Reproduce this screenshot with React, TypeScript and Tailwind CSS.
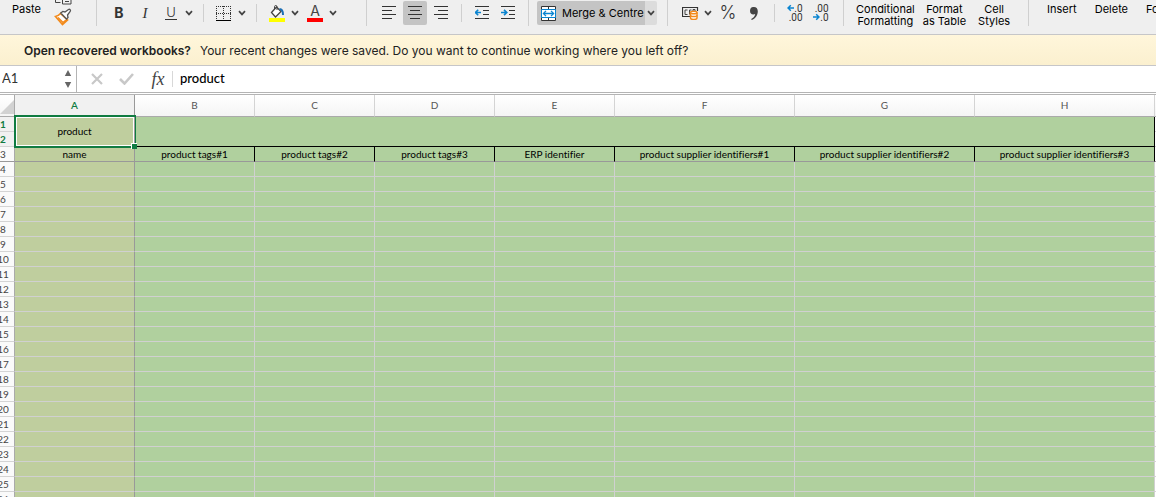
import type { ReactNode } from "react";
import clsx from "clsx";

const columns = [
  { id: "A", title: "name", width: "w-[120px]" },
  { id: "B", title: "product tags#1", width: "w-[120px]" },
  { id: "C", title: "product tags#2", width: "w-[120px]" },
  { id: "D", title: "product tags#3", width: "w-[120px]" },
  { id: "E", title: "ERP identifier", width: "w-[120px]" },
  { id: "F", title: "product supplier identifiers#1", width: "w-[180px]" },
  { id: "G", title: "product supplier identifiers#2", width: "w-[180px]" },
  { id: "H", title: "product supplier identifiers#3", width: "w-[180px]" },
];

const emptyRows = Array.from({ length: 23 }, (_, i) => i + 4);

function Divider() {
  return <span className="mx-2 mt-1 h-[18px] w-px shrink-0 bg-[#cfcfcf]" />;
}

function Group({ children, className }: { children: ReactNode; className?: string }) {
  return (
    <div className={clsx("flex h-[26px] shrink-0 border-r border-[#cfcfcf]", className)}>
      {children}
    </div>
  );
}

function Tool({
  label,
  active,
  children,
}: {
  label: string;
  active?: boolean;
  children: ReactNode;
}) {
  return (
    <button
      type="button"
      aria-label={label}
      className={clsx(
        "mt-px flex h-6 w-6 shrink-0 items-center justify-center rounded-xs",
        active && "bg-[#c4c4c4]"
      )}
    >
      {children}
    </button>
  );
}

function Chevron({ label, active }: { label: string; active?: boolean }) {
  return (
    <button
      type="button"
      aria-label={label}
      className={clsx(
        "mt-px flex h-6 w-3 shrink-0 items-center justify-center rounded-r-xs",
        active && "bg-[#dcdcdc]"
      )}
    >
      <svg width="8" height="6" viewBox="0 0 8 6" fill="none" stroke="#444" strokeWidth="1.7">
        <path d="M1 1.2 4 4.4 7 1.2" />
      </svg>
    </button>
  );
}

function AlignIcon({ lines }: { lines: number[][] }) {
  return (
    <svg width="14" height="14" viewBox="0 0 14 14" fill="#333">
      {lines.map(([x, w], i) => (
        <rect key={i} x={x} y={i * 4} width={w} height="1" />
      ))}
    </svg>
  );
}

function IndentIcon({ flip }: { flip?: boolean }) {
  return (
    <svg width="14" height="14" viewBox="0 0 14 14">
      <path d="M0 .5h14M8 4.5h6M8 8.5h6M0 12.5h14" stroke="#333" />
      <path
        d={flip ? "M0 6.5h5.5M3 3.8l2.8 2.7L3 9.2" : "M6 6.5H.8M3.2 3.8.5 6.5l2.7 2.7"}
        fill="none"
        stroke="#0a84d0"
        strokeWidth="1.6"
      />
    </svg>
  );
}

function BrushIcon() {
  return (
    <svg width="18" height="28" viewBox="0 0 18 28" fill="none">
      <path d="M1.500 -3v5.500h5M8.500 -3v7h8.500V-3M11 1.500h4" stroke="#444" />
      <path d="m1.500 16.500 7 8 5-4.500-7-6.500c-1.500 1.700-3 2.500-5 3Z" fill="#fff" stroke="#f28a1c" strokeWidth="1.700" />
      <path d="m4 17.500 5 5 3-2.500" stroke="#f28a1c" strokeWidth="1.500" />
      <path d="m6.800 13 2-1.600 2.200.6 3.500-2.500c1.200-.8 2.600.6 1.700 1.800L13.500 15l.5 2.500-1.500 1.500Z" fill="#fff" stroke="#555" strokeWidth="1.300" />
    </svg>
  );
}

function BordersIcon() {
  return (
    <svg width="16" height="16" viewBox="0 0 16 16" fill="none" stroke="#333">
      <path d="M.5 1v13M7.500 1v13M14.500 1v13M0 1.500h15M0 8.500h15" strokeDasharray="1 1" />
      <path d="M0 15.500h15" stroke="#000" />
    </svg>
  );
}

function FillIcon() {
  return (
    <svg width="16" height="17" viewBox="0 0 16 17" fill="none">
      <path d="m2.500 7.500 5-5.500 4.500 4.500-5.500 5.500Z" fill="#fff" stroke="#444" strokeWidth="1.300" />
      <path d="M5.500 4V1.500c0-1.300 2.500-1.300 2.500 0v3.500" stroke="#444" />
      <path d="M10.500 4c2.500 0 3.500 2 3.500 6" stroke="#1b6fb5" strokeWidth="2" />
      <rect y="13" width="16" height="4" fill="#ffff00" />
    </svg>
  );
}

function MergeIcon() {
  return (
    <svg width="15" height="15" viewBox="0 0 15 15" fill="none">
      <path d="M.5.5h14v14H.5ZM7.500.500v3M7.500 11.500v3" fill="#fff" stroke="#333" />
      <path d="M.5 3.500h14v8H.5Z" fill="#fff" stroke="#0a84d0" />
      <path d="M2.500 7.500h10M5 4.900 2.400 7.500 5 10.100M10 4.900l2.600 2.600L10 10.100" stroke="#0a84d0" strokeWidth="1.300" />
    </svg>
  );
}

function CurrencyIcon() {
  return (
    <svg width="17" height="14" viewBox="0 0 17 14" fill="none">
      <path d="M8 10.500H.5V1.500h15V5" stroke="#333" strokeWidth="1.200" />
      <path d="M5.500 4H3v4.500h2.500M9.500 4h-2v4.500M13 5V3.500h-2V6" stroke="#444" />
      <path d="M8.500 6.500v5.500c0 2 6.500 2 6.500 0V6.500" fill="#fff" stroke="#f28a1c" strokeWidth="1.500" />
      <ellipse cx="11.750" cy="6.500" rx="3.250" ry="1.300" fill="#fff" stroke="#f28a1c" strokeWidth="1.500" />
      <path d="M8.500 9.200c0 1.700 6.500 1.700 6.500 0" stroke="#f28a1c" strokeWidth="1.500" />
    </svg>
  );
}

function BlueArrow({ right }: { right?: boolean }) {
  return (
    <svg width="7" height="8" viewBox="0 0 7 8" fill="none" stroke="#0a84d0" strokeWidth="1.500">
      <path d={right ? "M0 4h6M3.200 1.200 6 4 3.200 6.800" : "M7 4H1M3.800 1.200 1 4l2.800 2.800"} />
    </svg>
  );
}

function Ribbon() {
  return (
    <div className="flex h-[35px] shrink-0 overflow-hidden border-b border-[#c6c6c8] bg-[#efefef] text-[11px] leading-3 text-black">
      <Group className="w-[97px] justify-between pr-6 pl-3">
        <button type="button" className="mt-[3px] h-3">
          Paste
        </button>
        <button type="button" aria-label="Format painter" className="h-[26px]">
          <BrushIcon />
        </button>
      </Group>

      <Group className="gap-0.5 pr-[27px] pl-[10px]">
        <Tool label="Bold">
          <span className="text-[14px] font-bold text-[#333]">B</span>
        </Tool>
        <Tool label="Italic">
          <span className="font-['Liberation_Serif',serif] text-[15px] text-[#333] italic">I</span>
        </Tool>
        <div className="flex">
          <Tool label="Underline">
            <span className="border-b border-[#333] px-px text-[13px] leading-[13px] font-light text-[#333]">U</span>
          </Tool>
          <Chevron label="Underline styles" />
          <Divider />
          <Tool label="Borders">
            <BordersIcon />
          </Tool>
          <Chevron label="Border styles" />
          <Divider />
          <Tool label="Fill colour">
            <FillIcon />
          </Tool>
          <Chevron label="Fill colours" />
        </div>
        <div className="flex">
          <Tool label="Font colour">
            <span className="w-4 border-b-4 border-[#ff0000] pb-px text-center text-[14px] leading-3 text-[#444]">A</span>
          </Tool>
          <Chevron label="Font colours" />
        </div>
      </Group>

      <Group className="pr-2 pl-[10px]">
        <div className="flex gap-0.5">
          <Tool label="Align left">
            <AlignIcon lines={[[0, 14], [0, 10], [0, 14], [0, 10]]} />
          </Tool>
          <Tool label="Centre" active>
            <AlignIcon lines={[[0, 14], [2, 10], [0, 14], [2, 10]]} />
          </Tool>
          <Tool label="Align right">
            <AlignIcon lines={[[0, 14], [4, 10], [0, 14], [4, 10]]} />
          </Tool>
        </div>
        <Divider />
        <div className="flex gap-0.5">
          <Tool label="Decrease indent">
            <IndentIcon />
          </Tool>
          <Tool label="Increase indent">
            <IndentIcon flip />
          </Tool>
        </div>
      </Group>

      <Group className="pr-[10px] pl-2">
        <button
          type="button"
          className="mt-px flex h-6 w-[108px] items-center gap-1.5 rounded-l-xs bg-[#c4c4c4] pl-1 whitespace-nowrap"
        >
          <MergeIcon />
          Merge &amp; Centre
        </button>
        <Chevron label="Merge options" active />
      </Group>

      <Group className="pr-[10px] pl-[10px]">
        <Tool label="Currency">
          <CurrencyIcon />
        </Tool>
        <Chevron label="Currency formats" />
        <div className="ml-0.5 flex gap-0.5">
          <Tool label="Percent">
            <span className="text-[18px] font-light text-[#333]">%</span>
          </Tool>
          <Tool label="Comma style">
            <svg width="8" height="13" viewBox="0 0 8 13" fill="#444">
              <path d="M4 0a3.700 3.700 0 0 0-.5 7.400c.8 0 1.300-.2 1.700-.5-.3 2.300-1.700 4-4 5l.5 1C5.300 11.600 7.800 8.500 7.800 4.200 7.800 1.500 6.200 0 4 0Z" />
            </svg>
          </Tool>
        </div>
        <Divider />
        <div className="flex gap-0.5 font-['Roboto',sans-serif] text-[10px] leading-[9px] text-[#333]">
          <Tool label="Increase decimal">
            <span className="flex flex-col items-end">
              <span className="flex">
                <BlueArrow />
                .0
              </span>
              <span>.00</span>
            </span>
          </Tool>
          <Tool label="Decrease decimal">
            <span className="flex flex-col items-end">
              <span>.00</span>
              <span className="flex">
                <BlueArrow right />
                .0
              </span>
            </span>
          </Tool>
        </div>
      </Group>

      <Group className="items-start gap-2 pt-[3px] pr-[18px] pl-3">
        <button type="button">
          Conditional
          <br />
          Formatting
        </button>
        <button type="button">
          Format
          <br />
          as Table
        </button>
        <button type="button" className="ml-1">
          Cell
          <br />
          Styles
        </button>
      </Group>

      <div className="flex shrink-0 items-start gap-[18px] pt-[3px] pl-[18px]">
        <button type="button">Insert</button>
        <button type="button">Delete</button>
        <button type="button">Format</button>
      </div>
    </div>
  );
}

function FormulaBar() {
  return (
    <div className="flex h-[27px] shrink-0 items-center border-b border-[#b4b4b4] bg-white text-black">
      <div className="flex h-full w-[77px] items-center border-r border-[#b4b4b4] pr-1">
        <input
          aria-label="Name box"
          defaultValue="A1"
          className="min-w-0 flex-1 pl-0.5 font-['Lato',sans-serif] text-[13px] text-[#333] outline-none"
        />
        <svg width="8" height="18" viewBox="0 0 8 18" fill="#666">
          <path d="M4 0 7.200 6H.8ZM4 18l3.200-6H.8Z" />
        </svg>
      </div>
      <button type="button" aria-label="Cancel" className="ml-[14px]">
        <svg width="12" height="12" viewBox="0 0 12 12" stroke="#c8c8c8" strokeWidth="2.200">
          <path d="m1 1 10 10M11 1 1 11" />
        </svg>
      </button>
      <button type="button" aria-label="Enter" className="ml-4">
        <svg width="15" height="12" viewBox="0 0 15 12" fill="none" stroke="#c8c8c8" strokeWidth="2.600">
          <path d="m1 6 4.500 4.500L14 1" />
        </svg>
      </button>
      <button
        type="button"
        aria-label="Insert function"
        className="ml-4 w-4 font-['Liberation_Serif',serif] text-[18px] leading-5 text-[#444] italic"
      >
        fx
      </button>
      <input
        aria-label="Formula"
        defaultValue="product"
        className="ml-[6px] h-4 min-w-0 flex-1 border-l border-[#d8d8d8] pl-[7px] font-['Lato',sans-serif] text-[13px] font-medium outline-none"
      />
    </div>
  );
}

function RowNumber({ n, selected }: { n: number; selected?: boolean }) {
  return (
    <th
      scope="row"
      className={clsx(
        "h-[15px] border-r border-b border-r-[#aaa] p-0 text-center",
        n === 3 ? "border-b-[#999]" : "border-b-[#d4d4d4]",
        selected ? "bg-[#f1f1f1] font-bold text-[#107c41]" : "bg-[#fafafa] font-normal text-[#444]"
      )}
    >
      {n}
    </th>
  );
}

function Sheet() {
  return (
    <div className="mt-px min-h-0 flex-1 overflow-hidden border-t border-[#b4b4b4] bg-white">
      {/* row headings are scrolled slightly past the left edge */}
      <table className="-ml-2 w-[1243px] table-fixed border-separate border-spacing-0 font-['Lato',sans-serif] text-[10px] leading-[14px] text-black [font-variant-ligatures:none]">
        <colgroup>
          <col className="w-[23px]" />
          {columns.map((c) => (
            <col key={c.id} className={c.width} />
          ))}
          <col />
        </colgroup>
        <thead>
          <tr className="bg-linear-to-b from-white to-[#f4f4f4] text-[#555]">
            <th className="h-[22px] border-r border-b border-[#aaa] p-0">
              <button type="button" aria-label="Select all" className="flex h-[21px] w-full items-end justify-end pb-0.5">
                <svg width="14" height="14" viewBox="0 0 14 14" fill="#d2d2d2">
                  <path d="M14 0v14H0Z" />
                </svg>
              </button>
            </th>
            {columns.map((c) => (
              <th
                key={c.id}
                scope="col"
                className={clsx(
                  "border-r border-b border-b-[#aaa] p-0 pb-px",
                  c.id === "A"
                    ? "border-r-[#999] bg-[#f1f1f1] font-semibold text-[#107c41]"
                    : "border-r-[#d4d4d4] font-normal"
                )}
              >
                {c.id}
              </th>
            ))}
            <th className="border-b border-[#aaa] p-0" />
          </tr>
        </thead>
        <tbody>
          <tr>
            <RowNumber n={1} selected />
            <td rowSpan={2} className="relative border-r border-b border-[#999] bg-[#bfce9e] p-0 pb-px text-center">
              product
              <div className="absolute -top-0.5 -right-0.5 -bottom-0.5 -left-px border-2 border-r border-[#107c41]">
                <div className="absolute inset-y-0 right-px left-0 border border-white" />
                <div className="absolute -right-0.5 -bottom-[3px] size-[6px] border-t border-l border-white bg-[#107c41]" />
              </div>
            </td>
            <td rowSpan={2} colSpan={7} className="border-r border-b border-black bg-[#b0d09e] p-0" />
            <td className="border-b border-[#d4d4d4] p-0" />
          </tr>
          <tr>
            <RowNumber n={2} selected />
            <td className="border-b border-[#d4d4d4] p-0" />
          </tr>
          <tr>
            <RowNumber n={3} />
            {columns.map((c) => (
              <td
                key={c.id}
                className={clsx(
                  "border-r border-b border-b-[#999] p-0 text-center whitespace-nowrap",
                  c.id === "A" ? "border-r-[#999] bg-[#bfce9e]" : "border-r-black bg-[#b0d09e]"
                )}
              >
                {c.title}
              </td>
            ))}
            <td className="border-b border-[#999] p-0" />
          </tr>
          {emptyRows.map((n) => (
            <tr key={n}>
              <RowNumber n={n} />
              {columns.map((c) => (
                <td
                  key={c.id}
                  className={clsx(
                    "border-r border-b border-b-[#d0d0d0] p-0",
                    c.id === "A" ? "border-r-[#999] bg-[#bfce9e]" : "border-r-[#d0d0d0] bg-[#b0d09e]"
                  )}
                />
              ))}
              <td className="border-b border-[#d4d4d4] p-0" />
            </tr>
          ))}
        </tbody>
      </table>
    </div>
  );
}

export default function App() {
  return (
    <div className="flex h-screen flex-col overflow-hidden bg-white font-['Inter',sans-serif]">
      <Ribbon />
      <div className="flex h-[31px] shrink-0 items-center gap-[9px] border-b border-[#c6c6c8] bg-linear-to-b from-[#fff6db] to-[#fbf0cf] pt-px pl-6 text-[12px] whitespace-nowrap text-[#222]">
        <strong className="font-semibold">Open recovered workbooks?</strong>
        <span>Your recent changes were saved. Do you want to continue working where you left off?</span>
      </div>
      <FormulaBar />
      <Sheet />
    </div>
  );
}
